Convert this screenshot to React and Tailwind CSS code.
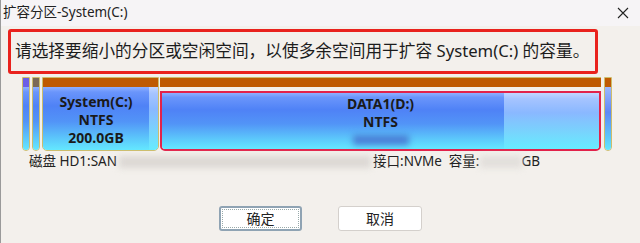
import React from 'react';

const font = { fontFamily: '"Noto Sans", "Noto Sans CJK SC", sans-serif' };

// blue partition body, darker at the top, cyan at the bottom
const usedBg =
  'bg-[linear-gradient(180deg,#8fb0ff_0%,#6a95fb_8%,#4f82f6_30%,#5294f7_55%,#5cc8fb_82%,#64e8ff_100%)]';
const freeBg =
  'bg-[linear-gradient(180deg,#c3d6ff_0%,#a6c4ff_10%,#8ab8ff_35%,#78d4fd_70%,#66ecff_100%)]';

function Sliver({ top, className = '' }) {
  return (
    <div className={`flex flex-col w-[8px] h-full border border-[#cdbd6c] rounded-b-[4px] overflow-hidden ${className}`}>
      <div className={`h-[9px] ${top}`} />
      <div className={`flex-1 ${usedBg}`} />
    </div>
  );
}

function Blur({ className }) {
  return <div className={`blur-[3px] ${className}`} />;
}

export default function App() {
  return (
    <div
      className="w-[640px] h-[243px] bg-[#f3f0ec] overflow-hidden border-l border-[#9a9a9a] text-[#1a1a1a]"
      style={font}
    >
      {/* Title bar */}
      <div className="h-[26px] bg-[#f6f4f6] flex items-center justify-between pl-[2px] pr-[11px]">
        <span className="text-[13.5px] leading-none text-[#222]">扩容分区-System(C:)</span>
        <svg width="12" height="12" viewBox="0 0 12 12">
          <path d="M1 1 L11 11 M11 1 L1 11" stroke="#222" strokeWidth="1.1" />
        </svg>
      </div>

      {/* Hint box */}
      <div className="mt-[3px] ml-[7px] w-[590px] h-[45px] border-[3px] border-[#e9221d] rounded-[3px] flex items-center pl-[4px]">
        <span className="text-[16.7px] leading-none text-[#1c1c1c] whitespace-nowrap">
          请选择要缩小的分区或空闲空间，以使多余空间用于扩容 System(C:) 的容量。
        </span>
      </div>

      {/* Disk map */}
      <div className="mt-[3px] ml-[21px] h-[74px] flex">
        <Sliver top="bg-[#6c5ee6]" />
        <Sliver top="bg-[#7b6a58]" className="ml-[2px]" />

        <div className="ml-[2px] w-[117px] h-full flex flex-col border border-[#cdbd6c] rounded-b-[5px] overflow-hidden">
          <div className="h-[9px] bg-[#bf5a02]" />
          <div className="flex-1 flex">
            <div className={`flex-1 ${usedBg} flex flex-col items-center pt-[6px] text-[14px] font-bold leading-[18px]`}>
              <span>System(C:)</span>
              <span>NTFS</span>
              <span>200.0GB</span>
            </div>
            <div className={`w-[9px] ${freeBg}`} />
          </div>
        </div>

        <div className="ml-[1px] w-[441px] h-full flex flex-col">
          <div className="h-[10px] bg-[#bf5a02] border-t border-[#cdbd6c]" />
          <div className="flex-1 flex border-[2px] border-[#e2224a] rounded-b-[5px] overflow-hidden mt-[4px]">
            <div className={`w-[342px] ${usedBg} flex flex-col items-center pt-[2px] pl-[95px] text-[14px] font-bold leading-[18px]`}>
              <span>DATA1(D:)</span>
              <span>NTFS</span>
              <Blur className="mt-[4px] w-[56px] h-[10px] bg-[#4a7fd6]" />
            </div>
            <div className={`flex-1 ${freeBg}`} />
          </div>
        </div>

        <div className="ml-[3px] flex flex-col w-[8px] h-full border border-[#cdbd6c] rounded-b-[4px] overflow-hidden">
          <div className="h-[9px] bg-[#bf5a02]" />
          <div className={`flex-1 bg-[linear-gradient(180deg,#9cb8ff_0%,#5f88f5_40%,#5cc8fb_80%,#64e8ff_100%)]`} />
        </div>
      </div>

      {/* Disk info */}
      <div className="ml-[28px] mt-[3px] h-[16px] flex items-center text-[13.5px] leading-none text-[#222]">
        <span>磁盘 HD1:SAN</span>
        <Blur className="ml-[2px] w-[252px] h-[12px] bg-[#dcd8d4]" />
        <span className="ml-[2px]">接口:NVMe&nbsp;&nbsp;容量:</span>
        <Blur className="w-[42px] h-[12px] bg-[#e2dfdb]" />
        <span>GB</span>
      </div>

      {/* Buttons */}
      <div className="mt-[36px] flex justify-center gap-[36px]">
        <button className="w-[83px] h-[25px] bg-white border-2 border-[#8fa3b3] rounded-[3px] outline outline-1 outline-dotted outline-offset-[-4px] outline-[#9aa] text-[14px] text-[#222]">
          确定
        </button>
        <button className="w-[84px] h-[25px] bg-white border border-[#d4d0cc] rounded-[3px] text-[14px] text-[#222]">
          取消
        </button>
      </div>
    </div>
  );
}
